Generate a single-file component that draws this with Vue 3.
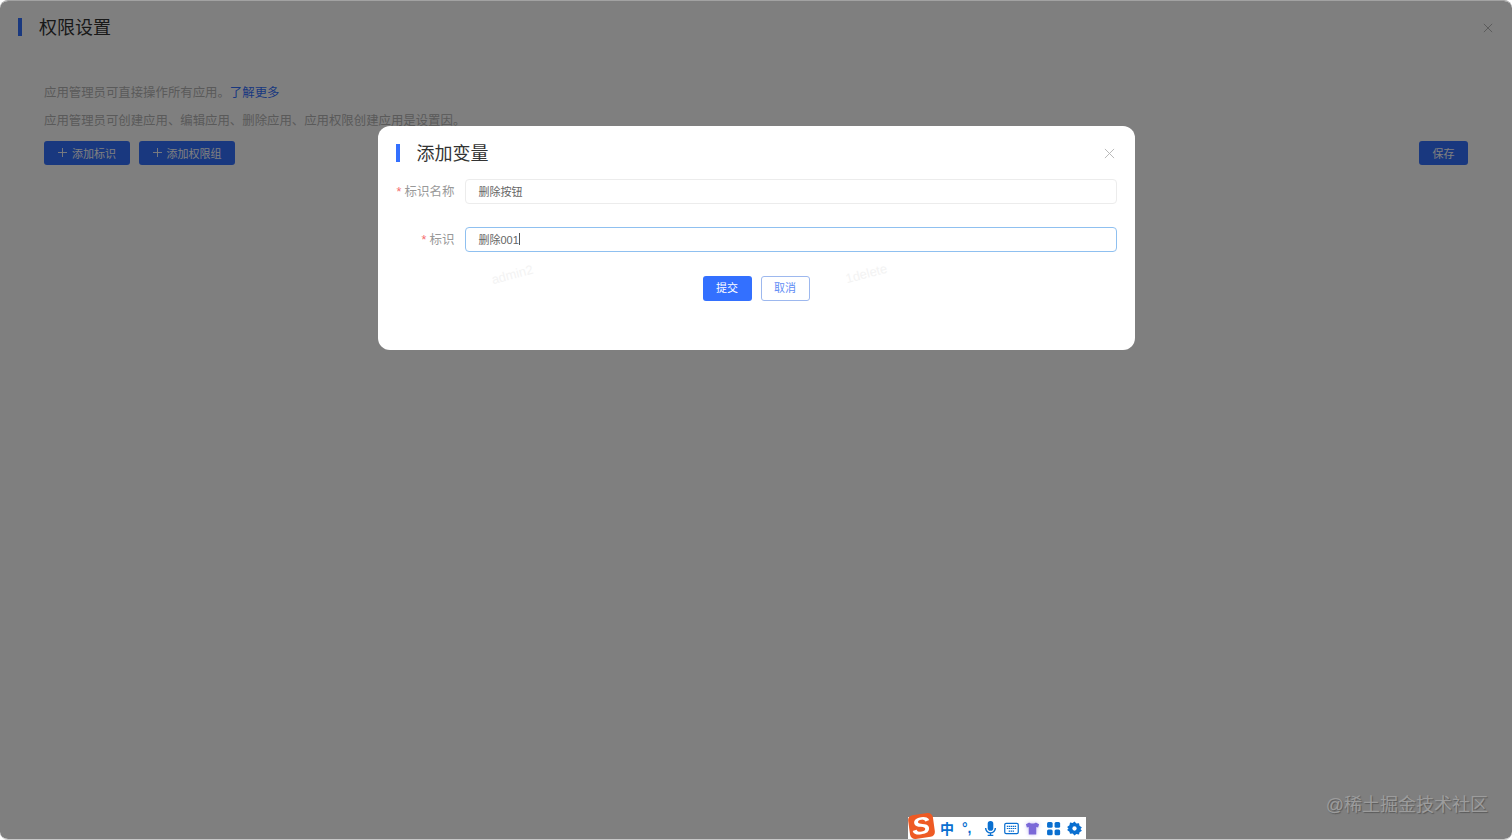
<template>
  <div class="page">
    <!-- 底层页面 -->
    <div class="panel">
      <header class="panel-head">
        <span class="title-bar"></span>
        <h2 class="panel-title">权限设置</h2>
        <svg class="close-icon" viewBox="0 0 12 12"><path d="M1 1l10 10M11 1L1 11" /></svg>
      </header>
      <div class="panel-body">
        <p class="desc">应用管理员可直接操作所有应用。<a class="link">了解更多</a></p>
        <p class="desc second">应用管理员可创建应用、编辑应用、删除应用、应用权限创建应用是设置因。</p>
        <div class="actions">
          <button class="btn primary wide">
            <svg class="plus" viewBox="0 0 10 10"><path d="M5 0v10M0 5h10" /></svg>添加标识
          </button>
          <button class="btn primary wider">
            <svg class="plus" viewBox="0 0 10 10"><path d="M5 0v10M0 5h10" /></svg>添加权限组
          </button>
          <button class="btn primary save">保存</button>
        </div>
      </div>
    </div>

    <!-- 遮罩与弹窗 -->
    <div class="mask">
      <div class="dialog">
        <header class="dialog-head">
          <span class="title-bar"></span>
          <h3 class="dialog-title">添加变量</h3>
          <svg class="dialog-close" viewBox="0 0 12 12"><path d="M1 1l10 10M11 1L1 11" /></svg>
        </header>
        <form class="form" @submit.prevent>
          <div class="row">
            <label class="label"><i>*</i>标识名称</label>
            <div class="input">删除按钮</div>
          </div>
          <div class="row">
            <label class="label"><i>*</i>标识</label>
            <div class="input focus">删除001<span class="caret"></span></div>
          </div>
          <div class="form-btns">
            <button class="btn primary small">提交</button>
            <button class="btn ghost small">取消</button>
          </div>
        </form>
        <span class="mark mark-a">admin2</span>
        <span class="mark mark-b">1delete</span>
      </div>
    </div>

    <div class="juejin">@稀土掘金技术社区</div>

    <!-- 输入法工具条 -->
    <div class="ime">
      <span class="ime-logo"><b>S</b></span>
      <span class="ime-zh">中</span>
      <span class="ime-punc">°,</span>
      <svg class="ime-icon" viewBox="0 0 14 16">
        <rect x="4" y="0" width="6" height="10.500" rx="3" fill="#0a6fd0" />
        <path d="M1.800 7.500a5.200 5.200 0 0 0 10.400 0M7 12.800v3M4 15.500h6" fill="none" stroke="#0a6fd0" stroke-width="1.500" />
      </svg>
      <svg class="ime-icon" viewBox="0 0 16 14">
        <rect x="0.800" y="1.500" width="14.400" height="11" rx="1.500" fill="none" stroke="#0a6fd0" stroke-width="1.300" />
        <path d="M3 4.800h10M3 7h10M5 9.800h6" stroke="#0a6fd0" stroke-width="1.300" stroke-dasharray="1.500 0.600" />
      </svg>
      <svg class="ime-icon shirt" viewBox="0 0 16 14">
        <path d="M4.500 0.500L1 2.500l1 3.500 2-.6V13.500h8V5.400l2 .6 1-3.500-3.500-2c-.8 1.500-6.200 1.500-7 0z" fill="#7a68d8" />
      </svg>
      <svg class="ime-icon" viewBox="0 0 14 14">
        <rect x="1" y="1" width="5.200" height="5.200" rx="1.400" fill="#0a6fd0" />
        <rect x="8" y="1" width="5.200" height="5.200" rx="1.400" fill="#0a6fd0" />
        <rect x="1" y="8" width="5.200" height="5.200" rx="1.400" fill="#0a6fd0" />
        <rect x="8" y="8" width="5.200" height="5.200" rx="1.400" fill="#0a6fd0" />
      </svg>
      <svg class="ime-icon" viewBox="0 0 14 14">
        <path d="M7 0.500l1.700 1.900 2.500-.4.500 2.500 2.200 1.500-1.300 1.500 1.300 1.500-2.200 1.500-.5 2-2.500-.4L7 13.500l-1.700-1.900-2.500.4-.5-2L.1 8.500l1.300-1.500L.1 5.500l2.200-1.500.5-2.500 2.500.4z" fill="#0a6fd0" />
        <circle cx="7" cy="7" r="2" fill="#fff" />
      </svg>
    </div>
  </div>
</template>

<script setup>
</script>

<style scoped>
.page {
  position: relative;
  width: 1512px;
  height: 840px;
  overflow: hidden;
  background: #fff;
  font-family: "Liberation Sans", "Noto Sans CJK SC", sans-serif;
}

/* 底层页面 */
.panel {
  height: 100%;
  box-sizing: border-box;
}

.panel-head {
  display: flex;
  align-items: center;
  height: 54px;
  padding: 0 18px;
}

.title-bar {
  flex-shrink: 0;
  width: 4px;
  height: 18px;
  background: #3370ff;
}

.panel-title {
  flex: 1;
  margin: -2px 0 0 17px;
  font-size: 18px;
  font-weight: 400;
  color: #333;
}

.close-icon {
  width: 10px;
  height: 10px;
  margin: 2px 1px 0 0;
  fill: none;
  stroke: #aaa;
  stroke-width: 1;
}

.panel-body {
  padding: 30px 44px 0;
}

.desc {
  margin: 0;
  height: 18px;
  line-height: 18px;
  font-size: 12.4px;
  color: #b4b4b4;
}

.desc.second {
  margin-top: 10px;
}

.link {
  color: #3370ff;
}

.actions {
  display: flex;
  gap: 9px;
  margin-top: 11px;
}

.btn {
  display: flex;
  align-items: center;
  justify-content: center;
  height: 24px;
  padding: 0 0 1px;
  border-radius: 3px;
  border: 1px solid transparent;
  box-sizing: border-box;
  font-family: inherit;
  font-size: 11px;
}

.primary {
  background: #3370ff;
  color: #fff;
}

.wide {
  width: 86px;
}

.wider {
  width: 96px;
}

.save {
  width: 49px;
  margin-left: auto;
}

.plus {
  width: 9px;
  height: 9px;
  margin-right: 5px;
  fill: none;
  stroke: #fff;
  stroke-width: 1;
}

/* 遮罩与弹窗 */
.mask {
  position: absolute;
  inset: 0;
  box-sizing: border-box;
  border-top: 1px solid #a2a2a2;
  border-bottom: 1px solid #c8c8c8;
  background: rgba(0, 0, 0, 0.5);
  background-clip: padding-box;
  border-radius: 8px;
}

.dialog {
  position: relative;
  box-sizing: border-box;
  width: 757px;
  height: 224px;
  margin: 125px auto 0;
  background: #fff;
  border-radius: 12px;
}

.dialog-head {
  display: flex;
  align-items: center;
  height: 53px;
  padding: 0 20px 0 18px;
}

.dialog-title {
  flex: 1;
  margin: -2px 0 0 17px;
  font-size: 18px;
  font-weight: 400;
  color: #333;
}

.dialog-close {
  width: 11px;
  height: 11px;
  margin-top: 1px;
  fill: none;
  stroke: #b4b4b4;
  stroke-width: 1;
}

.form {
  display: flex;
  flex-direction: column;
  gap: 23px;
  padding-right: 18px;
}

.row {
  display: flex;
  align-items: center;
  gap: 10px;
}

.label {
  flex-shrink: 0;
  width: 77px;
  padding-bottom: 2px;
  text-align: right;
  font-size: 12.5px;
  color: #999;
}

.label i {
  margin-right: 3px;
  font-style: normal;
  color: #f56c6c;
}

.input {
  flex: 1;
  display: flex;
  align-items: center;
  height: 25px;
  padding: 0 0 2px 13px;
  box-sizing: border-box;
  border: 1px solid #ececec;
  border-radius: 4px;
  font-size: 11px;
  color: #666;
}

.input.focus {
  border-color: #8fc0f0;
}

.caret {
  width: 1px;
  height: 12px;
  background: #555;
}

.form-btns {
  display: flex;
  justify-content: center;
  gap: 9px;
  margin-top: 1px;
  padding-left: 18px;
}

.small {
  width: 49px;
  height: 25px;
  padding-bottom: 3px;
}

.ghost {
  background: #fff;
  border-color: #9db8ee;
  color: #5f8df5;
}

.mark {
  position: absolute;
  font-size: 13px;
  color: #f3f3f3;
  transform: rotate(-15deg);
}

.mark-a {
  left: 113px;
  top: 141px;
}

.mark-b {
  left: 467px;
  top: 140px;
}

.juejin {
  position: absolute;
  right: 24px;
  bottom: 24px;
  font-size: 18px;
  color: #9c9c9c;
  text-shadow: 1px 1px 1px #5a5a5a;
}

/* 输入法工具条 */
.ime {
  position: absolute;
  left: 908px;
  top: 817px;
  display: flex;
  align-items: center;
  width: 178px;
  height: 22px;
  background: #fff;
}

.ime-logo {
  position: absolute;
  left: 1px;
  top: -3px;
  width: 25px;
  height: 24px;
  border-radius: 5px;
  background: #ee5a24;
  color: #fff;
  line-height: 24px;
  text-align: center;
  transform: rotate(-8deg);
}

.ime-logo b {
  display: inline-block;
  font-size: 24px;
  font-style: italic;
  transform: scaleX(1.15);
}

.ime-zh {
  margin-left: 32px;
  width: 15px;
  font-size: 14px;
  font-weight: 700;
  color: #0a6fd0;
}

.ime-punc {
  margin-left: 7px;
  width: 15px;
  font-size: 14px;
  font-weight: 700;
  color: #0a6fd0;
}

.ime-icon {
  width: 15px;
  height: 15px;
  margin-left: 6px;
}

.shirt {
  filter: drop-shadow(0 0 2px #c9c0f5);
}
</style>

<style>
body {
  margin: 0;
}
</style>
